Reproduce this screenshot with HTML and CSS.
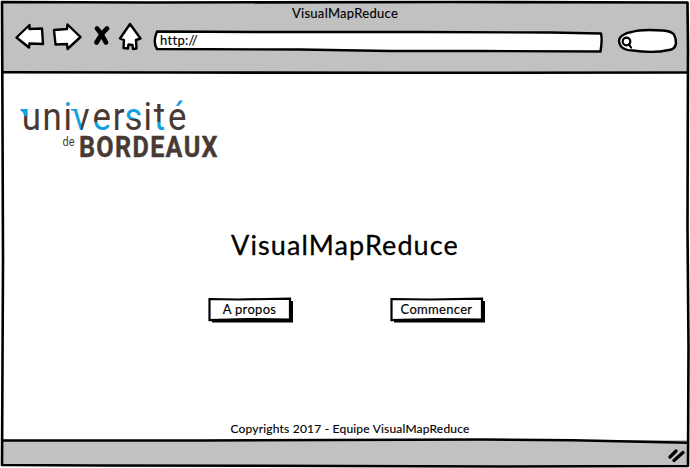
FILE: index.html
```html
<!DOCTYPE html>
<html lang="fr">
<head>
<meta charset="utf-8">
<title>VisualMapReduce</title>
<link rel="stylesheet" href="styles.css">
</head>
<body>
<div class="window">
  <header class="chrome">
    <div class="window-title">VisualMapReduce</div>
    <div class="toolbar">
      <svg class="nav-icons" width="130" height="34" viewBox="14 20 130 34">
        <g class="sketch">
          <path d="M16.500 37.500L29.500 25v4l12.500-.5 1 15.500-13.500-.5-.5 4z"/>
          <path d="M54 30l13-1 .5-4.500L80.500 37 67.500 49l-.5-5-11.500.5z"/>
          <path d="M130 24l10.500 14.500-4.500 1.500.5 8.500-3.500.5-.5-4-4-.5-.5 4-4.500-.5.5-8-4-1.500z"/>
        </g>
        <path class="cross" d="M97 28.500Q101 33 106 42.500M107 28.500Q102 33 96.500 42.500"/>
      </svg>
      <div class="address">
        <svg class="shape" width="450" height="24" viewBox="153 29 450 24">
          <path class="sketch" d="M157 31.500L270 32l150 0 130 .5 51 1q1.500 6-.5 18L480 51l-90 0-90-1.500-143-.5q-4.500-7 0-17.500z"/>
        </svg>
        <span class="url">http://</span>
      </div>
      <svg class="search" width="62" height="26" viewBox="616 28 62 26">
        <path class="sketch" d="M632 32q8-3 31-1.500 8 .5 11 4 2 4 2 9-1 6-7 6.500-16 3.500-36 .5-8 0-12-4-5-8 3-12 3-2 8-2.500z"/>
        <circle class="lens" cx="626.500" cy="41.500" r="3.800"/>
        <path class="lens" d="M629 44.500l2 3"/>
      </svg>
    </div>
  </header>
  <main class="page">
    <svg class="logo" width="202" height="66" viewBox="18 96 202 66">
      <defs>
        <linearGradient id="upper" gradientUnits="userSpaceOnUse" x1="0" y1="90" x2="0" y2="140">
          <stop class="blue" offset=".58"/><stop class="brown" offset=".58"/>
        </linearGradient>
        <linearGradient id="lower" gradientUnits="userSpaceOnUse" x1="0" y1="90" x2="0" y2="140">
          <stop class="brown" offset=".64"/><stop class="blue" offset=".64"/>
        </linearGradient>
        <linearGradient id="dot" gradientUnits="userSpaceOnUse" x1="0" y1="90" x2="0" y2="140">
          <stop class="blue" offset=".36"/><stop class="brown" offset=".36"/>
        </linearGradient>
        <linearGradient id="arm" gradientUnits="userSpaceOnUse" x1="82.700" y1="0" x2="101.500" y2="0">
          <stop class="blue" offset=".5"/><stop class="brown" offset=".5"/>
        </linearGradient>
      </defs>
      <text class="uni" transform="scale(.88 1)" y="130.500" x="24.700 48.300 72.300 82.700 105.100 128 141.600 163 174.700 191"><tspan>un</tspan><tspan fill="url(#dot)">i</tspan><tspan fill="url(#arm)">v</tspan><tspan fill="url(#lower)">e</tspan><tspan>r</tspan><tspan fill="url(#upper)">s</tspan><tspan>i</tspan><tspan fill="url(#lower)">t</tspan><tspan fill="url(#dot)">é</tspan></text>
      <path class="blue" d="M20.500 109h6.800v7h-3q-.5-4-3.800-5.500zM71 109h6v3q-3-2-6-1.500z"/>
      <text class="de" x="62.500" y="146" textLength="12" lengthAdjust="spacingAndGlyphs">de</text>
      <text class="bordeaux" transform="scale(.84 1)" x="94" y="157.500" textLength="165" lengthAdjust="spacing">BORDEAUX</text>
    </svg>
    <h1 class="heading">VisualMapReduce</h1>
    <div class="actions">
      <button class="btn about">
        <svg class="shape" width="87" height="28" viewBox="0 0 87 28"><path class="shadow" d="M4 4h81v21.500H4z"/><path class="face" d="M1.500 2L30 2.500l52-.8v21L40 22l-38.500 1z"/></svg>
        <span class="label">A propos</span>
      </button>
      <button class="btn start">
        <svg class="shape" width="97" height="28" viewBox="0 0 97 28"><path class="shadow" d="M4 4h91v21.500H4z"/><path class="face" d="M1.500 2L40 2.500l52-.8v21L45 22l-43.500 1z"/></svg>
        <span class="label">Commencer</span>
      </button>
    </div>
    <p class="copyright">Copyrights 2017 - Equipe VisualMapReduce</p>
  </main>
  <footer class="status">
    <svg width="18" height="16" viewBox="667 447 18 16"><path class="grip" d="M670 457l6-6M674 460.500l9-8"/></svg>
  </footer>
  <svg class="outline" width="690" height="468" viewBox="0 0 690 468">
    <path d="M2 2L150 2.500l300-.5 237.500.5.5 45-.5 180 1 120-.5 118.500L500 466.500l-240-.8-160-.2-98-.5L3 260 2.500 120z"/>
    <path d="M2.500 72.300L180 72.500l220 .3 288-.3M2.500 440.500h200l130-.5 150-.5 90 .8 116 2.500"/>
  </svg>
</div>
</body>
</html>
```
FILE: styles.css
```css
* { box-sizing: border-box; }
body { margin: 0; background: #fff; color: #000; font-family: Lato, "Open Sans", sans-serif; }
svg { display: block; }
.window { position: relative; display: flex; flex-direction: column; width: 690px; height: 468px; padding: 2px; overflow: hidden; }
.chrome { height: 71px; background: #c1c1c1; }
.window-title { height: 18px; padding-top: 3px; text-align: center; font-size: 13px; line-height: 16px; letter-spacing: .3px; }
.toolbar { display: flex; align-items: flex-start; padding-left: 12px; }
.nav-icons { margin-right: 9px; }
.address { position: relative; width: 450px; height: 24px; margin: 9px 13px 0 0; }
.shape { position: absolute; left: 0; top: 0; }
.url { position: relative; display: block; padding: 3px 0 0 7px; font-size: 13px; line-height: 16px; letter-spacing: .3px; -webkit-text-stroke: .15px #000; }
.search { margin-top: 8px; }
.sketch { fill: #fff; stroke: #000; stroke-width: 2.400; stroke-linejoin: round; }
.cross { fill: none; stroke: #000; stroke-width: 4.800; stroke-linecap: round; }
.lens { fill: none; stroke: #000; stroke-width: 2.200; stroke-linecap: round; }
.page { display: flex; flex-direction: column; height: 367px; }
.logo { margin: 23px 0 0 16px; overflow: visible; }
.uni { font-family: Roboto, sans-serif; font-size: 39.500px; fill: #483a32; }
.de { font-family: Roboto, sans-serif; font-size: 12px; fill: #483a32; }
.bordeaux { font-family: Roboto, sans-serif; font-size: 30px; font-weight: 700; fill: #483a32; stroke: #483a32; stroke-width: .4; }
.blue { fill: #12a0df; stop-color: #12a0df; }
.brown { stop-color: #483a32; }
.heading { margin: 65px 0 0; text-align: center; font-size: 27px; font-weight: 400; line-height: 36px; letter-spacing: 1.100px; -webkit-text-stroke: .3px #000; }
.actions { display: flex; gap: 95px; margin: 34px 0 0 206px; }
.btn { position: relative; height: 28px; padding: 0; border: 0; background: none; font: inherit; color: #000; }
.about { width: 87px; }
.start { width: 97px; }
.label { position: relative; display: block; padding-right: 4px; margin-top: -4px; font-size: 13px; line-height: 16px; letter-spacing: .3px; -webkit-text-stroke: .15px #000; }
.window-title, .copyright { -webkit-text-stroke: .15px #000; }
.shadow { fill: #000; }
.face { fill: #fff; stroke: #000; stroke-width: 2.200; }
.copyright { margin: 96px 0 0; padding-left: 10px; text-align: center; font-size: 12px; line-height: 16px; letter-spacing: .2px; }
.status { display: flex; justify-content: flex-end; height: 26px; padding: 7px 3px 0; background: #c1c1c1; }
.grip { fill: none; stroke: #000; stroke-width: 3.200; stroke-linecap: round; }
.outline { position: absolute; left: 0; top: 0; pointer-events: none; }
.outline path { fill: none; stroke: #000; stroke-width: 2.600; stroke-linejoin: round; }
```
